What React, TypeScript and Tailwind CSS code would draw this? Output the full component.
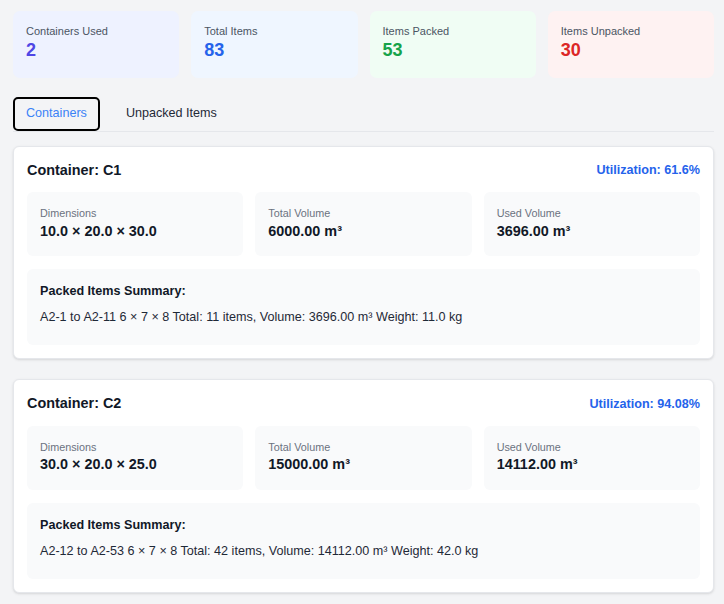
import { useState } from 'react';

const stats = [
  { label: 'Containers Used', value: '2', box: 'bg-[#eef2ff]', text: 'text-[#4f46e5]' },
  { label: 'Total Items', value: '83', box: 'bg-[#eff6ff]', text: 'text-[#2563eb]' },
  { label: 'Items Packed', value: '53', box: 'bg-[#f0fdf4]', text: 'text-[#16a34a]' },
  { label: 'Items Unpacked', value: '30', box: 'bg-[#fef2f2]', text: 'text-[#dc2626]' },
];

const containers = [
  {
    id: 'C1',
    utilization: '61.6%',
    dimensions: '10.0 × 20.0 × 30.0',
    totalVolume: '6000.00 m³',
    usedVolume: '3696.00 m³',
    summary: 'A2-1 to A2-11 6 × 7 × 8 Total: 11 items, Volume: 3696.00 m³ Weight: 11.0 kg',
  },
  {
    id: 'C2',
    utilization: '94.08%',
    dimensions: '30.0 × 20.0 × 25.0',
    totalVolume: '15000.00 m³',
    usedVolume: '14112.00 m³',
    summary: 'A2-12 to A2-53 6 × 7 × 8 Total: 42 items, Volume: 14112.00 m³ Weight: 42.0 kg',
  },
];

function InfoBox({ label, value }: { label: string; value: string }) {
  return (
    <div className="rounded-[6px] bg-[#f9fafb] px-[13px] py-[14px]">
      <div className="text-[10.8px] leading-[14.4px] text-[#6b7280]">{label}</div>
      <div className="text-[14.4px] leading-[21.6px] font-bold text-[#111827]">{value}</div>
    </div>
  );
}

export default function App() {
  const [tab, setTab] = useState<'containers' | 'unpacked'>('containers');

  return (
    <div className="min-h-screen bg-[#f3f4f6] pt-[11px] pl-[13px] pr-[10px] pb-4 font-['Liberation_Sans',Arial,sans-serif]">
      <div className="grid grid-cols-4 gap-[12px]">
        {stats.map((s) => (
          <div key={s.label} className={`rounded-[7px] ${s.box} px-[13px] pt-[13px] pb-[14px]`}>
            <div className="text-[11px] leading-[14.4px] text-[#4b5563]">{s.label}</div>
            <div className={`text-[18px] leading-[25.2px] font-bold ${s.text}`}>{s.value}</div>
          </div>
        ))}
      </div>

      <div className="mt-[19px] flex gap-[13px] border-b border-[#e5e7eb]">
        <button
          onClick={() => setTab('containers')}
          className={`h-[34px] rounded-[5px] px-[11px] text-[12.6px] ${
            tab === 'containers' ? 'border-2 border-black text-[#3b82f6]' : 'border-2 border-transparent text-[#1f2937]'
          }`}
        >
          Containers
        </button>
        <button
          onClick={() => setTab('unpacked')}
          className={`h-[34px] rounded-[5px] px-[11px] text-[12.6px] ${
            tab === 'unpacked' ? 'border-2 border-black text-[#3b82f6]' : 'border-2 border-transparent text-[#1f2937]'
          }`}
        >
          Unpacked Items
        </button>
      </div>

      <div className="mt-[14px] flex flex-col gap-[20px]">
        {containers.map((c) => (
          <div key={c.id} className="rounded-[6px] border border-[#e5e7eb] bg-white p-[13px] shadow-sm">
            <div className="mb-[11px] flex h-[21.6px] items-center justify-between">
              <h3 className="text-[14.4px] font-bold text-[#111827]">Container: {c.id}</h3>
              <span className="text-[12.6px] font-bold text-[#2563eb]">Utilization: {c.utilization}</span>
            </div>
            <div className="grid grid-cols-3 gap-[12px]">
              <InfoBox label="Dimensions" value={c.dimensions} />
              <InfoBox label="Total Volume" value={c.totalVolume} />
              <InfoBox label="Used Volume" value={c.usedVolume} />
            </div>
            <div className="mt-[13px] rounded-[6px] bg-[#f9fafb] px-[13px] pt-[13px] pb-[19px]">
              <div className="mb-[8px] text-[12.6px] leading-[18px] font-bold text-[#111827]">
                Packed Items Summary:
              </div>
              <div className="text-[12.6px] leading-[18px] text-[#1f2937]">{c.summary}</div>
            </div>
          </div>
        ))}
      </div>
    </div>
  );
}
